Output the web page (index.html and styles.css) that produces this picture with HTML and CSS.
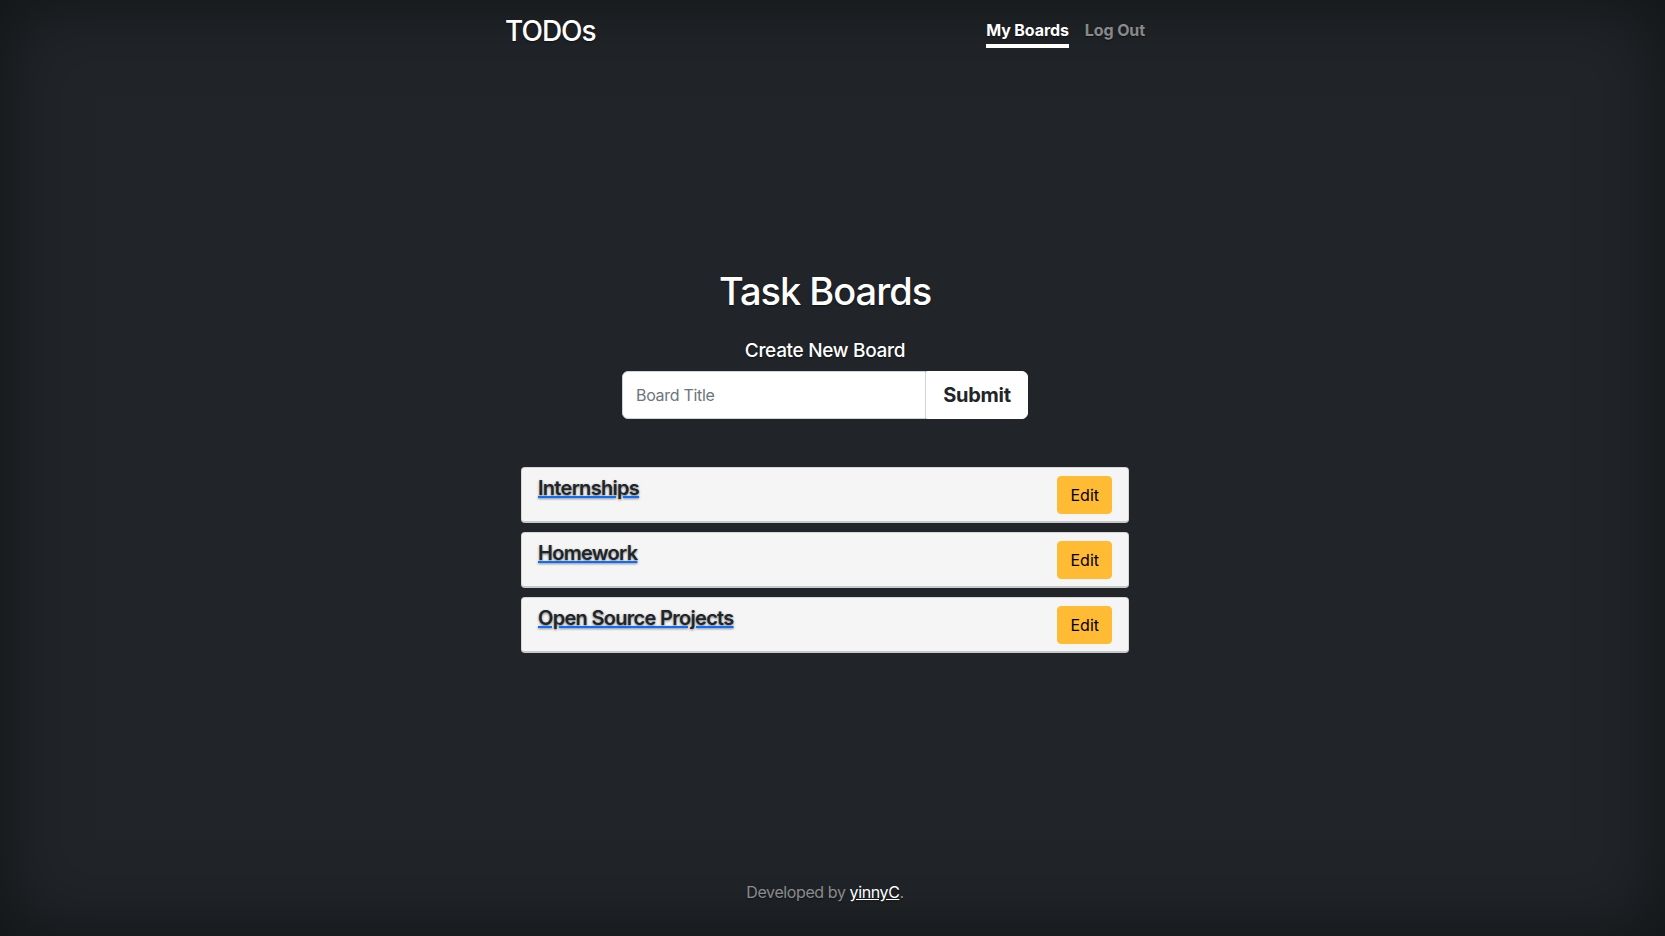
FILE: index.html
```html
<!DOCTYPE html>
<html lang="en">
<head>
<meta charset="utf-8">
<title>TODOs</title>
<link rel="stylesheet" href="styles.css">
</head>
<body>
<div class="page">
  <div class="cover">
    <header class="masthead">
      <h3 class="brand">TODOs</h3>
      <nav class="nav">
        <a class="nav-link active" href="#">My Boards</a>
        <a class="nav-link" href="#">Log Out</a>
      </nav>
    </header>

    <main class="main">
      <h1 class="heading">Task Boards</h1>
      <h5 class="subheading">Create New Board</h5>
      <form class="input-group">
        <input class="form-control" type="text" placeholder="Board Title">
        <button class="btn-submit" type="button">Submit</button>
      </form>

      <div class="boards">
        <div class="board-card">
          <h5 class="board-title"><a href="#">Internships</a></h5>
          <button class="btn-edit" type="button">Edit</button>
        </div>
        <div class="board-card">
          <h5 class="board-title"><a href="#">Homework</a></h5>
          <button class="btn-edit" type="button">Edit</button>
        </div>
        <div class="board-card">
          <h5 class="board-title"><a href="#">Open Source Projects</a></h5>
          <button class="btn-edit" type="button">Edit</button>
        </div>
      </div>
    </main>

    <footer class="footer">
      <p>Developed by <a href="#">yinnyC</a>.</p>
    </footer>
  </div>
</div>
</body>
</html>
```

FILE: styles.css
```css
* { box-sizing: border-box; }

html, body { height: 100%; }

body {
  margin: 0;
  background-color: #212529;
  color: #fff;
  font-family: Inter, "Noto Sans", "Liberation Sans", sans-serif;
  font-size: 16px;
  line-height: 1.5;
  text-align: center;
  text-shadow: 0 .05rem .1rem rgba(0, 0, 0, .5);
  box-shadow: inset 0 0 5rem rgba(0, 0, 0, .5);
}

.page {
  height: 100%;
  padding-right: 15px;
  display: flex;
}

.cover {
  display: flex;
  flex-direction: column;
  width: 100%;
  max-width: 672px;
  height: 100%;
  margin: 0 auto;
  padding: 16px;
}

/* header */
.masthead {
  display: flex;
  justify-content: space-between;
  align-items: flex-start;
  margin-bottom: auto;
}

.brand {
  margin: 0;
  font-size: 28px;
  font-weight: 500;
  line-height: 1.1;
  letter-spacing: -1px;
}

.nav {
  display: flex;
}

.nav-link {
  padding: 4px 0;
  margin-left: 16px;
  font-weight: 700;
  line-height: 20px;
  color: rgba(255, 255, 255, .5);
  text-decoration: none;
  border-bottom: 4px solid transparent;
  letter-spacing: -0.1px;
}

.nav-link.active {
  color: #fff;
  border-bottom-color: #fff;
}

/* main */
.main {
  padding: 0 16px;
  margin-bottom: 6px;
}

.heading {
  margin: 0 0 26px;
  font-size: 38px;
  font-weight: 500;
  line-height: 1.2;
  letter-spacing: -1px;
}

.subheading {
  margin: 0 0 8px;
  font-size: 19px;
  font-weight: 500;
  line-height: 1.2;
  letter-spacing: -0.3px;
}

.input-group {
  display: flex;
  justify-content: center;
  margin: 0;
}

.form-control {
  width: 304px;
  height: 48px;
  padding: 6px 13px;
  font-family: inherit;
  font-size: 16px;
  color: #212529;
  background: #fff;
  border: 1px solid #ced4da;
  border-radius: 6px 0 0 6px;
  outline: none;
}

.form-control::placeholder {
  color: #6c757d;
  letter-spacing: -0.3px;
}

.btn-submit {
  width: 102px;
  height: 48px;
  padding: 8px 16px;
  font-family: inherit;
  font-size: 20px;
  font-weight: 700;
  color: #212529;
  background: #fff;
  border: 1px solid #fff;
  border-radius: 0 6px 6px 0;
  letter-spacing: -0.3px;
  text-shadow: none;
}

.boards {
  margin-top: 48px;
  display: flex;
  flex-direction: column;
  gap: 9px;
}

.board-card {
  display: flex;
  justify-content: space-between;
  align-items: flex-start;
  padding: 8px 16px;
  background: #f5f5f5;
  border: 1px solid rgba(0, 0, 0, .125);
  border-bottom: 2px solid #c8c8c8;
  border-radius: 4px;
  text-align: left;
  height: 56px;
}

.board-title {
  margin: 0;
  font-size: 20px;
  font-weight: 600;
  line-height: 1.2;
  letter-spacing: -0.7px;
}

.board-title a {
  color: #212529;
  text-decoration: underline;
  text-decoration-color: #0d6efd;
  text-decoration-thickness: 2px;
  text-shadow: 0 .05rem .15rem rgba(0, 0, 0, .5);
}

.btn-edit {
  padding: 6px 12px;
  font-family: inherit;
  font-size: 16px;
  line-height: 24px;
  color: #000;
  background: #ffbb33;
  border: 1px solid #ffbb33;
  border-radius: 4px;
  text-shadow: none;
}

/* footer */
.footer {
  margin-top: auto;
  color: rgba(255, 255, 255, .5);
  letter-spacing: -0.4px;
}

.footer p {
  margin: 0 0 16px;
}

.footer a {
  color: #fff;
}
```
